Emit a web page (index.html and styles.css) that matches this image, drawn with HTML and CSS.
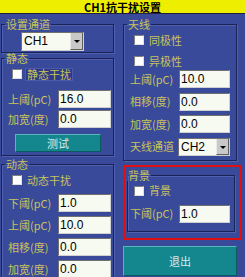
FILE: index.html
```html
<!DOCTYPE html>
<html lang="zh">
<head>
  <meta charset="UTF-8">
  <title>CH1抗干扰设置</title>
  <link rel="stylesheet" href="styles.css">
</head>
<body>
  <div class="title"><span class="title-text">CH1抗干扰设置</span></div>

  <div class="main">
    <!-- 左列 -->
    <div class="col col-left">
      <fieldset class="group g-chan">
        <legend>设置通道</legend>
        <div class="select sel-ch1"><span class="val">CH1</span><span class="arrow"></span></div>
      </fieldset>

      <fieldset class="group g-static">
        <legend>静态</legend>
        <div class="check focus"><span class="box"></span><span class="txt">静态干扰</span></div>
        <div class="rows rows-tight">
          <div class="row"><span class="lbl">上阈(pC)</span><span class="input">16.0</span></div>
          <div class="row"><span class="lbl">加宽(度)</span><span class="input">0.0</span></div>
        </div>
        <div class="btn btn-test">测试</div>
      </fieldset>

      <fieldset class="group g-dyn">
        <legend>动态</legend>
        <div class="check"><span class="box"></span><span class="txt">动态干扰</span></div>
        <div class="rows">
          <div class="row"><span class="lbl">下阈(pC)</span><span class="input">1.0</span></div>
          <div class="row"><span class="lbl">上阈(pC)</span><span class="input">10.0</span></div>
          <div class="row"><span class="lbl">相移(度)</span><span class="input">0.0</span></div>
          <div class="row"><span class="lbl">加宽(度)</span><span class="input">0.0</span></div>
        </div>
      </fieldset>
    </div>

    <!-- 右列 -->
    <div class="col col-right">
      <fieldset class="group g-ant">
        <legend>天线</legend>
        <div class="check"><span class="box"></span><span class="txt">同极性</span></div>
        <div class="check check-2"><span class="box"></span><span class="txt">异极性</span></div>
        <div class="rows">
          <div class="row"><span class="lbl">上阈(pC)</span><span class="input">10.0</span></div>
          <div class="row"><span class="lbl">相移(度)</span><span class="input">0.0</span></div>
          <div class="row"><span class="lbl">加宽(度)</span><span class="input">0.0</span></div>
          <div class="row"><span class="lbl">天线通道</span><div class="select sel-ch2"><span class="val">CH2</span><span class="arrow"></span></div></div>
        </div>
      </fieldset>

      <div class="mark">
        <fieldset class="group g-bg">
          <legend>背景</legend>
          <div class="check"><span class="box"></span><span class="txt">背景</span></div>
          <div class="row"><span class="lbl">下阈(pC)</span><span class="input">1.0</span></div>
        </fieldset>
      </div>

      <div class="btn btn-exit">退出</div>
    </div>
  </div>
</body>
</html>
```

FILE: styles.css
```css
html, body {
  margin: 0;
  padding: 0;
  overflow: hidden;
  height: 100%;
}
body {
  background-color: #3a4a9a;
  color: #c8c45a;
  font-family: "Noto Sans CJK SC", "DejaVu Sans", sans-serif;
  font-size: 11px;
  line-height: 11px;
}

/* 标题栏 */
.title {
  display: flex;
  justify-content: center;
  align-items: center;
  height: 13px;
  background: #eeee00;
  border-bottom: 1px solid #202040;
  color: #000;
  font-weight: bold;
  font-size: 11px;
}
.title-text { line-height: 12px; }

.main {
  display: flex;
  gap: 9px;
  padding-left: 1px;
  height: 263px;
  overflow: hidden;
}
.col {
  display: flex;
  flex-direction: column;
}
.col-left { width: 113px; }
.col-right { width: 114px; }

/* 分组框 */
.group {
  margin: 0;
  padding: 0 2px 0 6px;
  min-inline-size: 0;
  border: 1px solid #1a2256;
  box-shadow: inset 1px 1px 0 #5060ae, 1px 1px 0 #5060ae;
}
.group legend {
  margin-left: -3px;
  padding: 0 1px;
  height: 11px;
  line-height: 11px;
}

.g-chan { margin-top: 5px; padding-bottom: 1px; }
.g-static { padding-bottom: 3px; }
.g-dyn { margin-top: 3px; height: 126px; border-bottom: none; }
.g-ant { margin-top: 5px; padding-right: 6px; padding-bottom: 4px; }
.g-bg { padding: 0 4px 8px 2px; }

/* 复选框 */
.check {
  display: flex;
  align-items: center;
  gap: 4px;
  height: 14px;
  margin: 3px 0 0 4px;
}
.check-2 { margin-top: 7px; }
.check .box {
  width: 8px;
  height: 8px;
  background: #fff;
  border-top: 1px solid #808080;
  border-left: 1px solid #808080;
  border-right: 1px solid #e0e0e0;
  border-bottom: 1px solid #e0e0e0;
}
.check .txt { padding: 0 1px; }
.check.focus .txt {
  background: #2e3a88;
  outline: 1px solid #4a5aac;
}

/* 输入行 */
.rows {
  display: flex;
  flex-direction: column;
  gap: 4px;
  margin-top: 7px;
}
.rows-tight { gap: 2px; margin-top: 9px; }
.g-ant .rows { gap: 4.5px; margin-top: 2px; }
.row {
  display: flex;
  justify-content: space-between;
  align-items: center;
}
.input {
  box-sizing: border-box;
  width: 53px;
  height: 18px;
  padding-left: 1px;
  background: #f6faf0;
  color: #000;
  font-family: "Liberation Sans", sans-serif;
  font-size: 12px;
  line-height: 16px;
  border-top: 1px solid #707070;
  border-left: 1px solid #707070;
  border-right: 1px solid #d0d0d0;
  border-bottom: 1px solid #d0d0d0;
}
.g-ant .input, .g-bg .input { width: 51px; }
.g-bg .row { margin-top: 7px; }

/* 下拉框 */
.select {
  box-sizing: border-box;
  display: flex;
  height: 19px;
  background: #f6faf0;
  color: #000;
  font-family: "Liberation Sans", sans-serif;
  font-size: 12px;
  line-height: 17px;
  border-top: 1px solid #707070;
  border-left: 1px solid #707070;
  border-right: 1px solid #d0d0d0;
  border-bottom: 1px solid #d0d0d0;
}
.select .val { flex: 1; padding-left: 2px; }
.select .arrow {
  width: 11px;
  background: #c8c8c8;
  border-left: 1px solid #e8e8e8;
  border-right: 1px solid #606060;
  border-bottom: 1px solid #606060;
  position: relative;
}
.select .arrow::after {
  content: "";
  position: absolute;
  left: 3px;
  top: 7px;
  border-left: 3px solid transparent;
  border-right: 3px solid transparent;
  border-top: 3px solid #000;
}
.sel-ch1 { width: 63px; margin: 2px 0 0 13px; }
.sel-ch2 { width: 52px; height: 18px; }

/* 按钮 */
.btn {
  box-sizing: border-box;
  background: #14868e;
  color: #dceaea;
  text-align: center;
  border-top: 1px solid #56b6bc;
  border-left: 1px solid #56b6bc;
  border-right: 1px solid #0c5a60;
  border-bottom: 1px solid #0c5a60;
}
.btn-test {
  width: 86px;
  height: 18px;
  line-height: 16px;
  margin: 6px 0 0 7px;
}
.btn-exit {
  width: 114px;
  height: 30px;
  line-height: 28px;
  margin-top: 6px;
}

/* 红色标记框 */
.mark {
  margin: 4px -5px 0 1px;
  padding: 3px 5px 6px 1px;
  border: 2px solid #e01010;
}
```
